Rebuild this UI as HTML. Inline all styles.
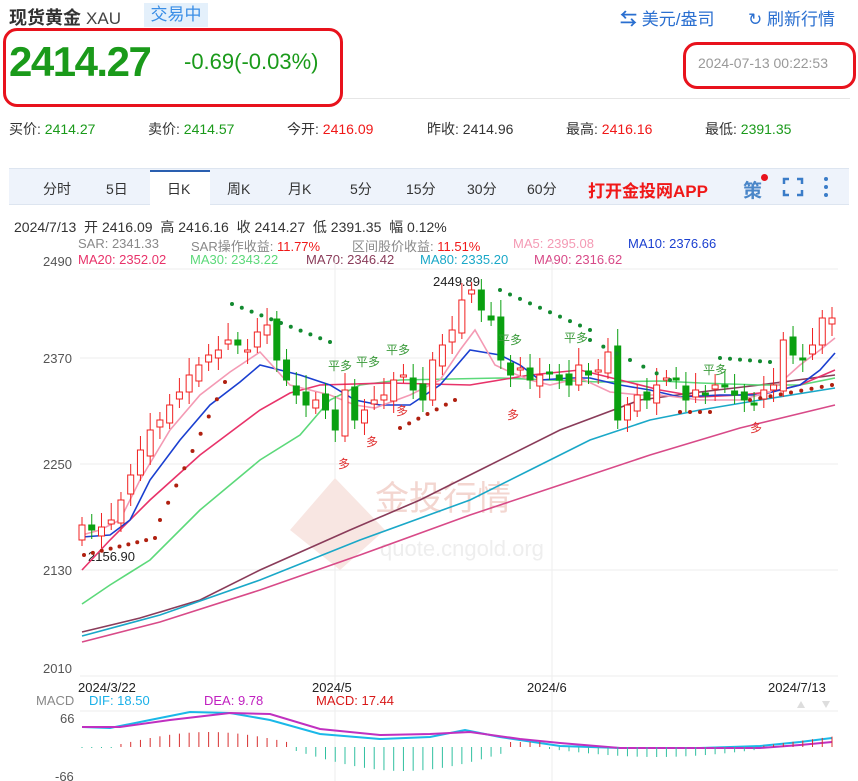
<!DOCTYPE html>
<html><head><meta charset="utf-8">
<style>
*{margin:0;padding:0;box-sizing:border-box}
body{width:858px;height:781px;background:#fff;font-family:"Liberation Sans","Noto Sans CJK SC",sans-serif;position:relative;overflow:hidden}
.a{position:absolute;white-space:nowrap}
.g{color:#1a9a1a}.r{color:#f01818}
</style></head><body>
<div class="a" style="left:9px;top:4px;font-size:18px;font-weight:bold;color:#333">现货黄金 <span style="font-weight:normal;font-size:17px;color:#444">XAU</span></div>
<div class="a" style="left:144px;top:3px;width:64px;height:24px;background:#e4f0fb;color:#3a8ee6;font-size:17px;line-height:24px;text-align:center">交易中</div>
<div class="a" style="left:620px;top:5px;font-size:17px;color:#2a6fd0"><span style="font-weight:bold">⇆</span> 美元/盎司</div>
<div class="a" style="left:748px;top:5px;font-size:17px;color:#2a6fd0">↻ 刷新行情</div>
<div class="a" style="left:3px;top:28px;width:340px;height:79px;border:3px solid #e8121c;border-radius:14px"></div>
<div class="a g" style="left:9px;top:38px;font-size:42px;font-weight:bold;letter-spacing:-1.5px">2414.27</div>
<div class="a g" style="left:184px;top:49px;font-size:22px">-0.69(-0.03%)</div>
<div class="a" style="left:683px;top:42px;width:173px;height:47px;border:3px solid #e8121c;border-radius:14px"></div>
<div class="a" style="left:698px;top:55px;font-size:14px;color:#999">2024-07-13 00:22:53</div>
<div class="a" style="left:343px;top:98px;width:507px;height:1px;background:#e6e6e6"></div>
<div class="a" style="left:9px;top:119px;font-size:14px;color:#333">买价: <span class="g">2414.27</span></div>
<div class="a" style="left:148px;top:119px;font-size:14px;color:#333">卖价: <span class="g">2414.57</span></div>
<div class="a" style="left:287px;top:119px;font-size:14px;color:#333">今开: <span class="r">2416.09</span></div>
<div class="a" style="left:427px;top:119px;font-size:14px;color:#333">昨收: <span>2414.96</span></div>
<div class="a" style="left:566px;top:119px;font-size:14px;color:#333">最高: <span class="r">2416.16</span></div>
<div class="a" style="left:705px;top:119px;font-size:14px;color:#333">最低: <span class="g">2391.35</span></div>
<div class="a" style="left:9px;top:168px;width:840px;height:37px;background:#eef3fb;border-top:1px solid #dde5f0;border-bottom:1px solid #dde5f0"></div>
<div class="a" style="left:150px;top:170px;width:60px;height:36px;background:#fff;border-top:2px solid #2a5fb0"></div>
<div class="a" style="left:0;top:179px;font-size:14px;color:#333">
<span class="a" style="left:43px">分时</span><span class="a" style="left:106px">5日</span><span class="a" style="left:167px">日K</span><span class="a" style="left:227px">周K</span><span class="a" style="left:288px">月K</span><span class="a" style="left:350px">5分</span><span class="a" style="left:406px">15分</span><span class="a" style="left:467px">30分</span><span class="a" style="left:527px">60分</span></div>
<div class="a" style="left:588px;top:177px;font-size:17px;font-weight:bold;color:#f01818">打开金投网APP</div>
<div class="a" style="left:743px;top:176px;font-size:19px;font-weight:bold;color:#4a86c8">策</div>
<div class="a" style="left:761px;top:174px;width:7px;height:7px;border-radius:50%;background:#e8121c"></div>
<svg class="a" style="left:782px;top:177px" width="22" height="20"><path d="M2 7V2h5M15 2h5v5M20 13v5h-5M7 18H2v-5" stroke="#3a7cc8" stroke-width="2.5" fill="none"/></svg>
<svg class="a" style="left:822px;top:176px" width="8" height="22"><circle cx="4" cy="3" r="2" fill="#3a7cc8"/><circle cx="4" cy="11" r="2" fill="#3a7cc8"/><circle cx="4" cy="19" r="2" fill="#3a7cc8"/></svg>
<div class="a" style="left:14px;top:217px;font-size:14px;color:#333">2024/7/13 &nbsp;开 2416.09 &nbsp;高 2416.16 &nbsp;收 2414.27 &nbsp;低 2391.35 &nbsp;幅 0.12%</div>
<div class="a" style="left:0;top:236px;font-size:13px">
<span class="a" style="left:78px;color:#888">SAR: 2341.33</span><span class="a" style="left:191px;color:#888">SAR操作收益: <span class="r">11.77%</span></span><span class="a" style="left:352px;color:#888">区间股价收益: <span class="r">11.51%</span></span><span class="a" style="left:513px;color:#f49ab4">MA5: 2395.08</span><span class="a" style="left:628px;color:#1a3fd0">MA10: 2376.66</span></div>
<div class="a" style="left:0;top:252px;font-size:13px">
<span class="a" style="left:43px;color:#555;top:2px">2490</span><span class="a" style="left:78px;color:#e8336a">MA20: 2352.02</span><span class="a" style="left:190px;color:#5cd97a">MA30: 2343.22</span><span class="a" style="left:306px;color:#8a3c5a">MA70: 2346.42</span><span class="a" style="left:420px;color:#1aa8c8">MA80: 2335.20</span><span class="a" style="left:534px;color:#d84a88">MA90: 2316.62</span></div>
<svg class="a" style="left:0;top:0" width="858" height="781" id="ch">
<g stroke="#eee" stroke-width="1"><line x1="80" y1="269" x2="838" y2="269"/><line x1="80" y1="358" x2="838" y2="358"/><line x1="80" y1="464" x2="838" y2="464"/><line x1="80" y1="570" x2="838" y2="570"/><line x1="80" y1="676" x2="838" y2="676"/><line x1="335" y1="260" x2="335" y2="781"/><line x1="552" y1="260" x2="552" y2="781"/><line x1="80" y1="711" x2="838" y2="711"/></g>
<g font-size="13" fill="#555" font-family="Liberation Sans"><text x="43" y="363">2370</text><text x="43" y="469">2250</text><text x="43" y="575">2130</text><text x="43" y="673">2010</text>
<text x="78" y="692" fill="#222">2024/3/22</text><text x="312" y="692" fill="#222">2024/5</text><text x="527" y="692" fill="#222">2024/6</text><text x="768" y="692" fill="#222">2024/7/13</text>
<text x="433" y="286" fill="#222">2449.89</text><text x="88" y="561" fill="#222">2156.90</text>
<text x="36" y="705" fill="#888">MACD</text><text x="89" y="705" fill="#1ab0e8">DIF: 18.50</text><text x="204" y="705" fill="#c020c0">DEA: 9.78</text><text x="316" y="705" fill="#d81818">MACD: 17.44</text>
<text x="60" y="723">66</text><text x="55" y="781">-66</text></g>
<text x="375" y="510" font-size="34" fill="#f3d6d0" font-family="Noto Sans CJK SC">金投行情</text>
<text x="380" y="556" font-size="22" fill="#eee" font-family="Liberation Sans">quote.cngold.org</text>
<path d="M335 478 L385 530 L340 570 L290 530Z" fill="#f8e6e2"/>
<g fill="none" stroke-width="1.6">
<polyline stroke="#8a3c5a" points="82,632 140,618 200,600 260,570 350,530 420,500 480,470 560,430 640,400 700,392 760,385 835,375"/>
<polyline stroke="#1aa8c8" points="82,636 160,615 260,580 360,540 470,500 530,470 590,440 650,420 700,410 760,400 835,388"/>
<polyline stroke="#d84a88" points="82,642 160,622 260,590 360,555 470,515 560,485 650,455 740,428 835,405"/>
<polyline stroke="#5cd97a" points="82,604 110,585 150,560 200,510 260,460 300,435 330,400 360,385 400,380 500,378 600,382 660,381 700,383 760,385 800,385 835,378"/>
<polyline stroke="#e8336a" points="82,570 110,540 150,500 200,455 260,410 290,393 320,385 390,383 470,385 530,375 580,370 620,380 660,390 700,397 740,395 770,392 800,385 835,370"/>
<polyline stroke="#1a3fd0" points="82,537 110,535 130,520 150,480 180,440 210,405 240,382 260,365 280,370 300,375 330,385 355,400 380,405 410,405 440,385 470,350 500,355 520,365 540,380 570,378 590,378 620,385 650,390 680,397 720,395 760,395 800,385 820,370 835,353"/>
<polyline stroke="#f49ab4" points="82,535 100,530 120,520 140,480 170,430 200,395 230,372 260,352 290,385 330,395 355,405 375,408 410,395 440,380 460,350 475,330 495,365 510,372 530,380 550,385 580,378 610,392 640,395 660,395 700,400 740,400 770,392 800,365 820,350 835,338"/></g>
<g id="cd"></g>
<g id="dots"></g>
<g font-size="12" font-family="Noto Sans CJK SC" fill="#3a9a3a"><text x="328" y="370">平多</text><text x="356" y="366">平多</text><text x="386" y="354">平多</text><text x="498" y="344">平多</text><text x="564" y="342">平多</text><text x="703" y="374">平多</text></g>
<g font-size="12" font-family="Noto Sans CJK SC" fill="#e03030"><text x="338" y="468">多</text><text x="366" y="446">多</text><text x="396" y="415">多</text><text x="507" y="419">多</text><text x="750" y="432">多</text></g>
<g stroke-width="2"><polyline id="dif" fill="none" stroke="#1ab8e8"/><polyline id="dea" fill="none" stroke="#c030c0"/></g>
<g id="mh"></g>
<path d="M797 708l4-7 4 7zM822 701l4 7 4-7z" fill="#ddd"/>
</svg>
<script>
var ys=[525,530,527,520,500,475,450,430,420,405,392,375,365,355,350,340,345,350,332,325,360,380,395,405,400,410,430,390,420,410,400,395,380,375,390,400,360,345,330,300,290,310,320,360,375,368,380,375,372,380,385,365,375,370,352,420,405,395,400,385,378,380,400,390,395,385,385,395,400,405,390,385,340,355,360,345,318,318];
var g=document.getElementById('cd'),n=ys.length,x0=82,dx=(832-82)/(n-1),h='';
for(var i=0;i<n;i++){var x=x0+i*dx,c=ys[i],o=i?ys[i-1]+((i*7)%5-2)*3:540,up=c<o,col=up?'#f02020':'#0aa010',t=Math.min(o,c),b=Math.max(o,c);if(b-t<2)b=t+2;
h+='<line x1="'+x+'" x2="'+x+'" y1="'+(t-8-(i%4)*3)+'" y2="'+(b+6+(i%3)*3)+'" stroke="'+col+'"/>';
h+='<rect x="'+(x-3)+'" y="'+t+'" width="6" height="'+(b-t)+'" fill="'+(up?'#fff':col)+'" stroke="'+col+'"/>';}
g.innerHTML=h;
var d='';function dots(a,b,ya,yb,c,k){for(var j=0;j<=k;j++){var x=a+(b-a)*j/k,y=ya+(yb-ya)*j/k;d+='<circle cx="'+x+'" cy="'+y+'" r="2" fill="'+c+'"/>';}}
dots(84,155,555,538,'#b02010',8);dots(160,225,520,382,'#b02010',8);
dots(232,330,304,342,'#138a30',10);dots(500,590,290,330,'#138a30',9);dots(590,670,340,380,'#138a30',6);dots(720,770,358,362,'#138a30',5);
dots(400,455,428,400,'#b02010',6);dots(680,710,412,412,'#b02010',3);dots(750,832,400,385,'#b02010',8);
document.getElementById('dots').innerHTML=d;
document.getElementById('dif').setAttribute('points','82,727 110,728 150,720 190,712 230,713 270,720 320,734 380,739 430,737 465,730 500,737 560,746 620,748 700,748 760,746 800,742 832,738');
document.getElementById('dea').setAttribute('points','82,727 120,727 170,720 230,713 270,714 320,729 380,735 430,734 470,732 520,739 560,743 620,748 700,748 760,748 800,745 832,742');
var m='';for(var i=0;i<n;i++){var x=x0+i*dx,v;
if(i<4)v=-1;else if(i<22)v=3+12*Math.sin((i-4)/18*Math.PI);else if(i<44)v=-(4+20*Math.sin((i-22)/22*Math.PI));else if(i<48)v=5;else if(i<70)v=-(2+8*Math.sin((i-48)/22*Math.PI));else v=(i-69)*1.3;
var y0=747;m+='<line x1="'+x+'" x2="'+x+'" y1="'+y0+'" y2="'+(y0-v)+'" stroke="'+(v>0?'#d83030':'#30c0a0')+'"/>';}
document.getElementById('mh').innerHTML=m;
</script>
</body></html>
